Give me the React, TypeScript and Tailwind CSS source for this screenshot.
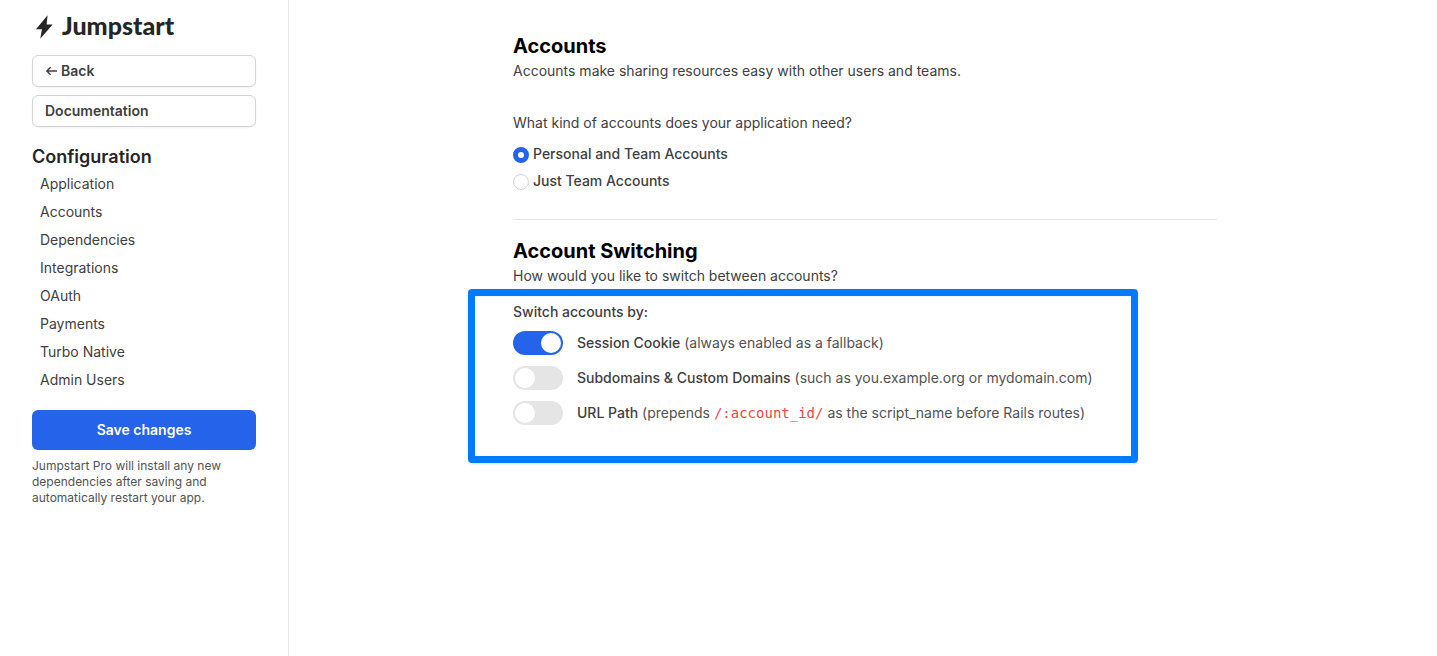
import { useState } from "react";

const navItems = [
    "Application",
    "Accounts",
    "Dependencies",
    "Integrations",
    "OAuth",
    "Payments",
    "Turbo Native",
    "Admin Users",
];

function Logo() {
    return (
        <a href="#" className="flex items-center gap-2 pl-1 h-8 text-neutral-800">
            <svg viewBox="0 0 18 24" className="w-[18px] h-6 shrink-0" fill="currentColor" aria-hidden="true">
                <path d="M11.6.2 0 14.2h5.9L4.3 23.8 16.6 9.6h-6z" />
            </svg>
            <span className="pb-1 font-[Lato,sans-serif] font-black text-[25px] leading-7">Jumpstart</span>
        </a>
    );
}

function Sidebar() {
    return (
        <aside className="w-[289px] shrink-0 border-r border-neutral-200 px-8 pt-[11px]">
            <Logo />

            <div className="mt-3 space-y-2">
                <a href="#" className="flex items-center gap-1 h-8 px-3 border border-neutral-300 rounded-md shadow-xs font-semibold">
                    <svg viewBox="0 0 12 12" className="w-3 h-3" fill="none" stroke="currentColor" strokeWidth="1.4" aria-hidden="true">
                        <path d="M12 6H1.8M5.6 2.2 1.8 6l3.8 3.8" />
                    </svg>
                    Back
                </a>
                <a href="#" className="flex items-center h-8 px-3 border border-neutral-300 rounded-md shadow-xs font-semibold">
                    Documentation
                </a>
            </div>

            <h2 className="mt-[17px] text-lg leading-[26px] font-semibold text-neutral-800">Configuration</h2>
            <nav>
                {navItems.map((item) => (
                    <a key={item} href="#" className="block px-2 leading-7">
                        {item}
                    </a>
                ))}
            </nav>

            <button type="submit" form="settings" className="mt-4 w-full h-10 rounded-md bg-[#2563eb] text-white font-semibold">
                Save changes
            </button>
            <p className="mt-2 text-xs text-neutral-600">
                Jumpstart Pro will install any new dependencies after saving and automatically restart your app.
            </p>
        </aside>
    );
}

interface ToggleProps {
    id: string;
    label: string;
    defaultChecked?: boolean;
    children: React.ReactNode;
}

function Toggle({ id, label, defaultChecked = false, children }: ToggleProps) {
    const [checked, setChecked] = useState(defaultChecked);

    return (
        <label htmlFor={id} className="flex items-center h-6 cursor-pointer">
            <input
                id={id}
                type="checkbox"
                className="peer sr-only"
                checked={checked}
                onChange={e => setChecked(e.target.checked)}
            />
            <span className="w-[50px] h-6 shrink-0 rounded-full bg-neutral-200 p-[2px] after:block after:size-5 after:rounded-full after:bg-white peer-checked:bg-[#2563eb] peer-checked:after:ml-auto" />
            <span className="ml-[14px] text-neutral-600">
                <span className="font-medium text-neutral-700">{label}</span> {children}
            </span>
        </label>
    );
}

export default function App() {
    const [kind, setKind] = useState("both");

    const radioClass = "appearance-none size-4 mt-[2px] rounded-full border border-neutral-300 bg-white checked:border-[5px] checked:border-[#2563eb]";

    return (
        <div className="flex min-h-screen bg-white font-[Inter,sans-serif] text-sm text-neutral-700">
            <Sidebar />

            <main className="flex-1 pl-1">
                <form id="settings" className="max-w-3xl mx-auto px-8 pt-8" onSubmit={e => e.preventDefault()}>
                    <section className="pb-7 border-b border-neutral-200">
                        <h1 className="text-xl leading-7 font-bold text-black">Accounts</h1>
                        <p className="leading-[22px]">Accounts make sharing resources easy with other users and teams.</p>

                        <fieldset className="mt-[30px]">
                            <legend className="leading-[22px]">What kind of accounts does your application need?</legend>
                            <div className="mt-[10px] space-y-[7px]">
                                <label className="flex items-center gap-1 h-5 font-medium">
                                    <input type="radio" name="kind" className={radioClass} checked={kind === "both"} onChange={() => setKind("both")} />
                                    Personal and Team Accounts
                                </label>
                                <label className="flex items-center gap-1 h-5 font-medium">
                                    <input type="radio" name="kind" className={radioClass} checked={kind === "team"} onChange={() => setKind("team")} />
                                    Just Team Accounts
                                </label>
                            </div>
                        </fieldset>
                    </section>

                    <section className="pt-[17px]">
                        <h1 className="text-xl leading-7 font-bold text-black">Account Switching</h1>
                        <p className="leading-[22px]">How would you like to switch between accounts?</p>

                        <div className="relative mt-[13px]">
                            <div className="absolute -left-[45px] -top-[11px] w-[670px] h-[174px] rounded-sm border-7 border-[#007bff] shadow-sm inset-shadow-xs pointer-events-none" />
                            <p className="leading-6 font-medium">Switch accounts by:</p>
                            <div className="mt-[7px] space-y-[11px]">
                                <Toggle id="cookie" label="Session Cookie" defaultChecked>
                                    (always enabled as a fallback)
                                </Toggle>
                                <Toggle id="domains" label="Subdomains &amp; Custom Domains">
                                    (such as you.example.org or mydomain.com)
                                </Toggle>
                                <Toggle id="path" label="URL Path">
                                    (prepends <code className="font-['DejaVu_Sans_Mono',monospace] text-[#ef4444]">/:account_id/</code> as the script_name before Rails routes)
                                </Toggle>
                            </div>
                        </div>
                    </section>
                </form>
            </main>
        </div>
    );
}
